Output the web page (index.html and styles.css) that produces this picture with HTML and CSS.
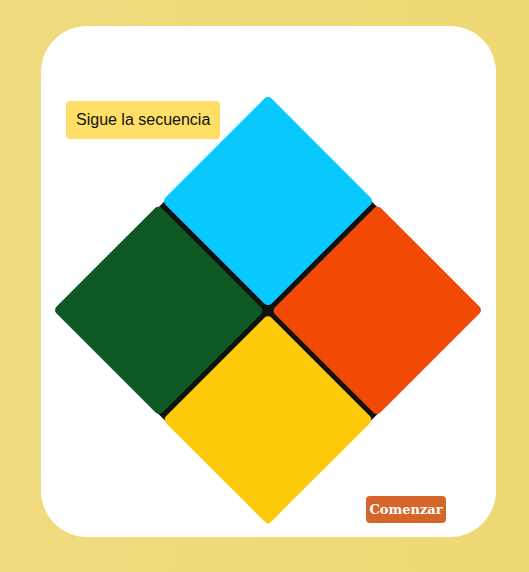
FILE: index.html
```html
<!DOCTYPE html>
<html lang="es">
<head>
<meta charset="utf-8">
<title>Simon</title>
<link rel="stylesheet" href="styles.css">
</head>
<body>
<main class="card">
  <div class="label">Sigue la secuencia</div>
  <div class="stage">
    <div class="board">
      <div class="tile tile-blue"></div>
      <div class="tile tile-orange"></div>
      <div class="tile tile-green"></div>
      <div class="tile tile-yellow"></div>
    </div>
  </div>
  <button class="start">Comenzar</button>
</main>
</body>
</html>
```
FILE: styles.css
```css
html, body {
  margin: 0;
  padding: 0;
}
body {
  width: 529px;
  height: 572px;
  background: linear-gradient(to right, #f0dc80, #eed874);
  font-family: "Liberation Sans", Arial, sans-serif;
  overflow: hidden;
}
.card {
  box-sizing: border-box;
  width: 455px;
  height: 511px;
  margin: 26px 0 0 41px;
  background: #ffffff;
  border-radius: 46px;
  display: grid;
  grid-template: 1fr / 1fr;
}
.card > * {
  grid-area: 1 / 1;
}
.label {
  justify-self: start;
  align-self: start;
  margin: 75px 0 0 25px;
  padding: 10px 10px;
  background: #ffdf66;
  border-radius: 4px;
  font-size: 16px;
  line-height: 18px;
  color: #111;
}
.stage {
  justify-self: center;
  align-self: start;
  margin: 69px 1px 0 0;
  width: 430px;
  height: 430px;
  display: flex;
  align-items: center;
  justify-content: center;
}
.board {
  width: 304px;
  height: 304px;
  background: linear-gradient(#111, #111) center / calc(100% - 3px) calc(100% - 3px) no-repeat;
  transform: rotate(45deg);
  display: grid;
  grid-template-columns: 1fr 1fr;
  grid-template-rows: 1fr 1fr;
  gap: 5px;
}
.tile {
  border-radius: 5px;
}
.tile-blue { background: #08c8fd; }
.tile-orange { background: #f24a05; }
.tile-green { background: #0f5a24; }
.tile-yellow { background: #fcca08; }
.start {
  justify-self: end;
  align-self: end;
  margin: 0 50px 14px 0;
  width: 80px;
  height: 27px;
  padding: 0;
  border: none;
  border-radius: 4px;
  background: #d6652a;
  color: #fff;
  font-family: "DejaVu Serif", "Liberation Serif", serif;
  font-weight: bold;
  font-size: 13px;
}
```
